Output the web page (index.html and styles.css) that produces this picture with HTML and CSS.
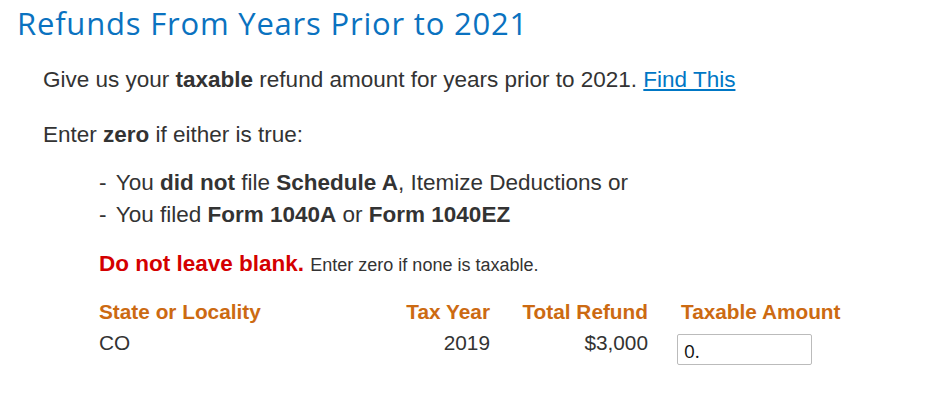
FILE: index.html
```html
<!DOCTYPE html>
<html lang="en">
<head>
    <meta charset="UTF-8">
    <title>Refunds From Years Prior to 2021</title>
    <link rel="stylesheet" href="styles.css">
</head>
<body>
    <h1 class="page-title">Refunds From Years Prior to 2021</h1>
    <div class="content">
        <p class="intro">Give us your <b>taxable</b> refund amount for years prior to 2021. <a href="#" class="find-link">Find This</a></p>
        <p class="intro">Enter <b>zero</b> if either is true:</p>

        <ul class="conditions">
            <li>You <b>did not</b> file <b>Schedule A</b>, Itemize Deductions or</li>
            <li>You filed <b>Form 1040A</b> or <b>Form 1040EZ</b></li>
        </ul>

        <div class="section">
            <p class="warning"><span class="warning-strong">Do not leave blank.</span> <span class="warning-note">Enter zero if none is taxable.</span></p>

            <div class="refund-table">
                <div class="th">State or Locality</div>
                <div class="th num">Tax Year</div>
                <div class="th num">Total Refund</div>
                <div class="th amount-head">Taxable Amount</div>

                <div class="td">CO</div>
                <div class="td num">2019</div>
                <div class="td num">$3,000</div>
                <div class="td amount-cell"><input type="text" class="amount-input" value="0."></div>
            </div>
        </div>
    </div>
</body>
</html>
```

FILE: styles.css
```css
body {
    margin: 0;
    font-family: "Liberation Sans", Arial, sans-serif;
    color: #333;
    background: #fff;
}

.page-title {
    margin: 0;
    padding: 5px 0 0 17px;
    font-family: "Open Sans", sans-serif;
    font-weight: 500;
    font-size: 31px;
    letter-spacing: 0.8px;
    line-height: 36px;
    color: #0a72c0;
}

.content {
    padding-left: 43px;
}

.intro {
    margin: 23px 0 0;
    font-size: 22.5px;
    line-height: 32px;
}

.intro + .intro {
    margin-top: 23px;
}

.find-link {
    color: #0077c5;
}

.conditions {
    list-style: none;
    margin: 16px 0 0;
    padding-left: 56px;
    font-size: 22.5px;
    line-height: 32px;
}

.conditions li::before {
    content: "- ";
    margin-right: 3px;
}

.section {
    padding-left: 56px;
}

.warning {
    margin: 17px 0 0;
    font-size: 22.5px;
    line-height: 32px;
}

.warning-strong {
    font-weight: bold;
    color: #d40000;
}

.warning-note {
    font-size: 18px;
}

.refund-table {
    display: grid;
    grid-template-columns: 291px 100px 158px 220px;
    margin-top: 17px;
    align-items: start;
    white-space: nowrap;
}

.th {
    font-size: 20.8px;
    font-weight: bold;
    color: #cc6a12;
    line-height: 28px;
}

.td {
    font-size: 20.8px;
    line-height: 28px;
    padding-top: 3px;
}

.num {
    text-align: right;
}

.amount-head {
    padding-left: 33px;
}

.amount-cell {
    padding-left: 29px;
    padding-top: 8px;
}

.amount-input {
    display: block;
    width: 135px;
    height: 31px;
    box-sizing: border-box;
    border: 1px solid #bbb;
    border-radius: 2px;
    padding: 2px 6px 0;
    font-family: "Open Sans", sans-serif;
    font-size: 19px;
    color: #111;
}
```
